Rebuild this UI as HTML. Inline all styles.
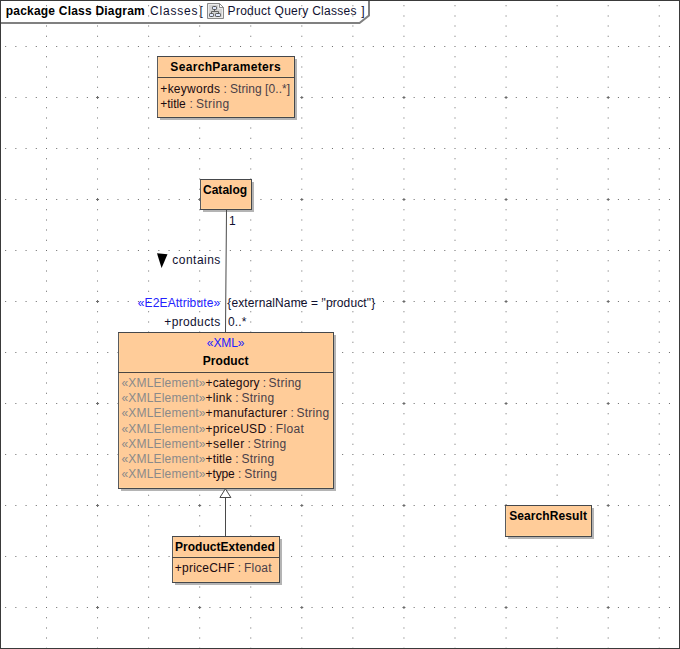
<!DOCTYPE html>
<html><head><meta charset="utf-8"><style>
html,body{margin:0;padding:0;background:#fff;width:680px;height:649px;overflow:hidden}
svg{display:block}
text{font-family:"Liberation Sans",sans-serif;font-size:12px}
.b{font-weight:bold}
</style></head><body>
<svg width="680" height="649" viewBox="0 0 680 649">
<rect x="0" y="0" width="680" height="649" fill="#fff"/>
<path d="M5.15 46h1v1h-1zM15.36 46h1v1h-1zM25.57 46h1v1h-1zM35.79 46h1v1h-1zM46.00 46h1v1h-1zM56.21 46h1v1h-1zM66.42 46h1v1h-1zM76.64 46h1v1h-1zM86.85 46h1v1h-1zM97.06 46h1v1h-1zM107.28 46h1v1h-1zM117.49 46h1v1h-1zM127.70 46h1v1h-1zM137.91 46h1v1h-1zM148.12 46h1v1h-1zM158.34 46h1v1h-1zM168.55 46h1v1h-1zM178.76 46h1v1h-1zM188.97 46h1v1h-1zM199.19 46h1v1h-1zM209.40 46h1v1h-1zM219.61 46h1v1h-1zM229.83 46h1v1h-1zM240.04 46h1v1h-1zM250.25 46h1v1h-1zM260.46 46h1v1h-1zM270.68 46h1v1h-1zM280.89 46h1v1h-1zM291.10 46h1v1h-1zM301.31 46h1v1h-1zM311.53 46h1v1h-1zM321.74 46h1v1h-1zM331.95 46h1v1h-1zM342.16 46h1v1h-1zM352.38 46h1v1h-1zM362.59 46h1v1h-1zM372.80 46h1v1h-1zM383.01 46h1v1h-1zM393.23 46h1v1h-1zM403.44 46h1v1h-1zM413.65 46h1v1h-1zM423.86 46h1v1h-1zM434.07 46h1v1h-1zM444.29 46h1v1h-1zM454.50 46h1v1h-1zM464.71 46h1v1h-1zM474.93 46h1v1h-1zM485.14 46h1v1h-1zM495.35 46h1v1h-1zM505.56 46h1v1h-1zM515.78 46h1v1h-1zM525.99 46h1v1h-1zM536.20 46h1v1h-1zM546.41 46h1v1h-1zM556.62 46h1v1h-1zM566.84 46h1v1h-1zM577.05 46h1v1h-1zM587.26 46h1v1h-1zM597.48 46h1v1h-1zM607.69 46h1v1h-1zM617.90 46h1v1h-1zM628.11 46h1v1h-1zM638.33 46h1v1h-1zM648.54 46h1v1h-1zM658.75 46h1v1h-1zM668.96 46h1v1h-1zM679.18 46h1v1h-1zM5.15 97h1v1h-1zM15.36 97h1v1h-1zM25.57 97h1v1h-1zM35.79 97h1v1h-1zM46.00 97h1v1h-1zM56.21 97h1v1h-1zM66.42 97h1v1h-1zM76.64 97h1v1h-1zM86.85 97h1v1h-1zM97.06 97h1v1h-1zM107.28 97h1v1h-1zM117.49 97h1v1h-1zM127.70 97h1v1h-1zM137.91 97h1v1h-1zM148.12 97h1v1h-1zM158.34 97h1v1h-1zM168.55 97h1v1h-1zM178.76 97h1v1h-1zM188.97 97h1v1h-1zM199.19 97h1v1h-1zM209.40 97h1v1h-1zM219.61 97h1v1h-1zM229.83 97h1v1h-1zM240.04 97h1v1h-1zM250.25 97h1v1h-1zM260.46 97h1v1h-1zM270.68 97h1v1h-1zM280.89 97h1v1h-1zM291.10 97h1v1h-1zM301.31 97h1v1h-1zM311.53 97h1v1h-1zM321.74 97h1v1h-1zM331.95 97h1v1h-1zM342.16 97h1v1h-1zM352.38 97h1v1h-1zM362.59 97h1v1h-1zM372.80 97h1v1h-1zM383.01 97h1v1h-1zM393.23 97h1v1h-1zM403.44 97h1v1h-1zM413.65 97h1v1h-1zM423.86 97h1v1h-1zM434.07 97h1v1h-1zM444.29 97h1v1h-1zM454.50 97h1v1h-1zM464.71 97h1v1h-1zM474.93 97h1v1h-1zM485.14 97h1v1h-1zM495.35 97h1v1h-1zM505.56 97h1v1h-1zM515.78 97h1v1h-1zM525.99 97h1v1h-1zM536.20 97h1v1h-1zM546.41 97h1v1h-1zM556.62 97h1v1h-1zM566.84 97h1v1h-1zM577.05 97h1v1h-1zM587.26 97h1v1h-1zM597.48 97h1v1h-1zM607.69 97h1v1h-1zM617.90 97h1v1h-1zM628.11 97h1v1h-1zM638.33 97h1v1h-1zM648.54 97h1v1h-1zM658.75 97h1v1h-1zM668.96 97h1v1h-1zM679.18 97h1v1h-1zM5.15 148h1v1h-1zM15.36 148h1v1h-1zM25.57 148h1v1h-1zM35.79 148h1v1h-1zM46.00 148h1v1h-1zM56.21 148h1v1h-1zM66.42 148h1v1h-1zM76.64 148h1v1h-1zM86.85 148h1v1h-1zM97.06 148h1v1h-1zM107.28 148h1v1h-1zM117.49 148h1v1h-1zM127.70 148h1v1h-1zM137.91 148h1v1h-1zM148.12 148h1v1h-1zM158.34 148h1v1h-1zM168.55 148h1v1h-1zM178.76 148h1v1h-1zM188.97 148h1v1h-1zM199.19 148h1v1h-1zM209.40 148h1v1h-1zM219.61 148h1v1h-1zM229.83 148h1v1h-1zM240.04 148h1v1h-1zM250.25 148h1v1h-1zM260.46 148h1v1h-1zM270.68 148h1v1h-1zM280.89 148h1v1h-1zM291.10 148h1v1h-1zM301.31 148h1v1h-1zM311.53 148h1v1h-1zM321.74 148h1v1h-1zM331.95 148h1v1h-1zM342.16 148h1v1h-1zM352.38 148h1v1h-1zM362.59 148h1v1h-1zM372.80 148h1v1h-1zM383.01 148h1v1h-1zM393.23 148h1v1h-1zM403.44 148h1v1h-1zM413.65 148h1v1h-1zM423.86 148h1v1h-1zM434.07 148h1v1h-1zM444.29 148h1v1h-1zM454.50 148h1v1h-1zM464.71 148h1v1h-1zM474.93 148h1v1h-1zM485.14 148h1v1h-1zM495.35 148h1v1h-1zM505.56 148h1v1h-1zM515.78 148h1v1h-1zM525.99 148h1v1h-1zM536.20 148h1v1h-1zM546.41 148h1v1h-1zM556.62 148h1v1h-1zM566.84 148h1v1h-1zM577.05 148h1v1h-1zM587.26 148h1v1h-1zM597.48 148h1v1h-1zM607.69 148h1v1h-1zM617.90 148h1v1h-1zM628.11 148h1v1h-1zM638.33 148h1v1h-1zM648.54 148h1v1h-1zM658.75 148h1v1h-1zM668.96 148h1v1h-1zM679.18 148h1v1h-1zM5.15 199h1v1h-1zM15.36 199h1v1h-1zM25.57 199h1v1h-1zM35.79 199h1v1h-1zM46.00 199h1v1h-1zM56.21 199h1v1h-1zM66.42 199h1v1h-1zM76.64 199h1v1h-1zM86.85 199h1v1h-1zM97.06 199h1v1h-1zM107.28 199h1v1h-1zM117.49 199h1v1h-1zM127.70 199h1v1h-1zM137.91 199h1v1h-1zM148.12 199h1v1h-1zM158.34 199h1v1h-1zM168.55 199h1v1h-1zM178.76 199h1v1h-1zM188.97 199h1v1h-1zM199.19 199h1v1h-1zM209.40 199h1v1h-1zM219.61 199h1v1h-1zM229.83 199h1v1h-1zM240.04 199h1v1h-1zM250.25 199h1v1h-1zM260.46 199h1v1h-1zM270.68 199h1v1h-1zM280.89 199h1v1h-1zM291.10 199h1v1h-1zM301.31 199h1v1h-1zM311.53 199h1v1h-1zM321.74 199h1v1h-1zM331.95 199h1v1h-1zM342.16 199h1v1h-1zM352.38 199h1v1h-1zM362.59 199h1v1h-1zM372.80 199h1v1h-1zM383.01 199h1v1h-1zM393.23 199h1v1h-1zM403.44 199h1v1h-1zM413.65 199h1v1h-1zM423.86 199h1v1h-1zM434.07 199h1v1h-1zM444.29 199h1v1h-1zM454.50 199h1v1h-1zM464.71 199h1v1h-1zM474.93 199h1v1h-1zM485.14 199h1v1h-1zM495.35 199h1v1h-1zM505.56 199h1v1h-1zM515.78 199h1v1h-1zM525.99 199h1v1h-1zM536.20 199h1v1h-1zM546.41 199h1v1h-1zM556.62 199h1v1h-1zM566.84 199h1v1h-1zM577.05 199h1v1h-1zM587.26 199h1v1h-1zM597.48 199h1v1h-1zM607.69 199h1v1h-1zM617.90 199h1v1h-1zM628.11 199h1v1h-1zM638.33 199h1v1h-1zM648.54 199h1v1h-1zM658.75 199h1v1h-1zM668.96 199h1v1h-1zM679.18 199h1v1h-1zM5.15 250h1v1h-1zM15.36 250h1v1h-1zM25.57 250h1v1h-1zM35.79 250h1v1h-1zM46.00 250h1v1h-1zM56.21 250h1v1h-1zM66.42 250h1v1h-1zM76.64 250h1v1h-1zM86.85 250h1v1h-1zM97.06 250h1v1h-1zM107.28 250h1v1h-1zM117.49 250h1v1h-1zM127.70 250h1v1h-1zM137.91 250h1v1h-1zM148.12 250h1v1h-1zM158.34 250h1v1h-1zM168.55 250h1v1h-1zM178.76 250h1v1h-1zM188.97 250h1v1h-1zM199.19 250h1v1h-1zM209.40 250h1v1h-1zM219.61 250h1v1h-1zM229.83 250h1v1h-1zM240.04 250h1v1h-1zM250.25 250h1v1h-1zM260.46 250h1v1h-1zM270.68 250h1v1h-1zM280.89 250h1v1h-1zM291.10 250h1v1h-1zM301.31 250h1v1h-1zM311.53 250h1v1h-1zM321.74 250h1v1h-1zM331.95 250h1v1h-1zM342.16 250h1v1h-1zM352.38 250h1v1h-1zM362.59 250h1v1h-1zM372.80 250h1v1h-1zM383.01 250h1v1h-1zM393.23 250h1v1h-1zM403.44 250h1v1h-1zM413.65 250h1v1h-1zM423.86 250h1v1h-1zM434.07 250h1v1h-1zM444.29 250h1v1h-1zM454.50 250h1v1h-1zM464.71 250h1v1h-1zM474.93 250h1v1h-1zM485.14 250h1v1h-1zM495.35 250h1v1h-1zM505.56 250h1v1h-1zM515.78 250h1v1h-1zM525.99 250h1v1h-1zM536.20 250h1v1h-1zM546.41 250h1v1h-1zM556.62 250h1v1h-1zM566.84 250h1v1h-1zM577.05 250h1v1h-1zM587.26 250h1v1h-1zM597.48 250h1v1h-1zM607.69 250h1v1h-1zM617.90 250h1v1h-1zM628.11 250h1v1h-1zM638.33 250h1v1h-1zM648.54 250h1v1h-1zM658.75 250h1v1h-1zM668.96 250h1v1h-1zM679.18 250h1v1h-1zM5.15 301h1v1h-1zM15.36 301h1v1h-1zM25.57 301h1v1h-1zM35.79 301h1v1h-1zM46.00 301h1v1h-1zM56.21 301h1v1h-1zM66.42 301h1v1h-1zM76.64 301h1v1h-1zM86.85 301h1v1h-1zM97.06 301h1v1h-1zM107.28 301h1v1h-1zM117.49 301h1v1h-1zM127.70 301h1v1h-1zM137.91 301h1v1h-1zM148.12 301h1v1h-1zM158.34 301h1v1h-1zM168.55 301h1v1h-1zM178.76 301h1v1h-1zM188.97 301h1v1h-1zM199.19 301h1v1h-1zM209.40 301h1v1h-1zM219.61 301h1v1h-1zM229.83 301h1v1h-1zM240.04 301h1v1h-1zM250.25 301h1v1h-1zM260.46 301h1v1h-1zM270.68 301h1v1h-1zM280.89 301h1v1h-1zM291.10 301h1v1h-1zM301.31 301h1v1h-1zM311.53 301h1v1h-1zM321.74 301h1v1h-1zM331.95 301h1v1h-1zM342.16 301h1v1h-1zM352.38 301h1v1h-1zM362.59 301h1v1h-1zM372.80 301h1v1h-1zM383.01 301h1v1h-1zM393.23 301h1v1h-1zM403.44 301h1v1h-1zM413.65 301h1v1h-1zM423.86 301h1v1h-1zM434.07 301h1v1h-1zM444.29 301h1v1h-1zM454.50 301h1v1h-1zM464.71 301h1v1h-1zM474.93 301h1v1h-1zM485.14 301h1v1h-1zM495.35 301h1v1h-1zM505.56 301h1v1h-1zM515.78 301h1v1h-1zM525.99 301h1v1h-1zM536.20 301h1v1h-1zM546.41 301h1v1h-1zM556.62 301h1v1h-1zM566.84 301h1v1h-1zM577.05 301h1v1h-1zM587.26 301h1v1h-1zM597.48 301h1v1h-1zM607.69 301h1v1h-1zM617.90 301h1v1h-1zM628.11 301h1v1h-1zM638.33 301h1v1h-1zM648.54 301h1v1h-1zM658.75 301h1v1h-1zM668.96 301h1v1h-1zM679.18 301h1v1h-1zM5.15 352h1v1h-1zM15.36 352h1v1h-1zM25.57 352h1v1h-1zM35.79 352h1v1h-1zM46.00 352h1v1h-1zM56.21 352h1v1h-1zM66.42 352h1v1h-1zM76.64 352h1v1h-1zM86.85 352h1v1h-1zM97.06 352h1v1h-1zM107.28 352h1v1h-1zM117.49 352h1v1h-1zM127.70 352h1v1h-1zM137.91 352h1v1h-1zM148.12 352h1v1h-1zM158.34 352h1v1h-1zM168.55 352h1v1h-1zM178.76 352h1v1h-1zM188.97 352h1v1h-1zM199.19 352h1v1h-1zM209.40 352h1v1h-1zM219.61 352h1v1h-1zM229.83 352h1v1h-1zM240.04 352h1v1h-1zM250.25 352h1v1h-1zM260.46 352h1v1h-1zM270.68 352h1v1h-1zM280.89 352h1v1h-1zM291.10 352h1v1h-1zM301.31 352h1v1h-1zM311.53 352h1v1h-1zM321.74 352h1v1h-1zM331.95 352h1v1h-1zM342.16 352h1v1h-1zM352.38 352h1v1h-1zM362.59 352h1v1h-1zM372.80 352h1v1h-1zM383.01 352h1v1h-1zM393.23 352h1v1h-1zM403.44 352h1v1h-1zM413.65 352h1v1h-1zM423.86 352h1v1h-1zM434.07 352h1v1h-1zM444.29 352h1v1h-1zM454.50 352h1v1h-1zM464.71 352h1v1h-1zM474.93 352h1v1h-1zM485.14 352h1v1h-1zM495.35 352h1v1h-1zM505.56 352h1v1h-1zM515.78 352h1v1h-1zM525.99 352h1v1h-1zM536.20 352h1v1h-1zM546.41 352h1v1h-1zM556.62 352h1v1h-1zM566.84 352h1v1h-1zM577.05 352h1v1h-1zM587.26 352h1v1h-1zM597.48 352h1v1h-1zM607.69 352h1v1h-1zM617.90 352h1v1h-1zM628.11 352h1v1h-1zM638.33 352h1v1h-1zM648.54 352h1v1h-1zM658.75 352h1v1h-1zM668.96 352h1v1h-1zM679.18 352h1v1h-1zM5.15 403h1v1h-1zM15.36 403h1v1h-1zM25.57 403h1v1h-1zM35.79 403h1v1h-1zM46.00 403h1v1h-1zM56.21 403h1v1h-1zM66.42 403h1v1h-1zM76.64 403h1v1h-1zM86.85 403h1v1h-1zM97.06 403h1v1h-1zM107.28 403h1v1h-1zM117.49 403h1v1h-1zM127.70 403h1v1h-1zM137.91 403h1v1h-1zM148.12 403h1v1h-1zM158.34 403h1v1h-1zM168.55 403h1v1h-1zM178.76 403h1v1h-1zM188.97 403h1v1h-1zM199.19 403h1v1h-1zM209.40 403h1v1h-1zM219.61 403h1v1h-1zM229.83 403h1v1h-1zM240.04 403h1v1h-1zM250.25 403h1v1h-1zM260.46 403h1v1h-1zM270.68 403h1v1h-1zM280.89 403h1v1h-1zM291.10 403h1v1h-1zM301.31 403h1v1h-1zM311.53 403h1v1h-1zM321.74 403h1v1h-1zM331.95 403h1v1h-1zM342.16 403h1v1h-1zM352.38 403h1v1h-1zM362.59 403h1v1h-1zM372.80 403h1v1h-1zM383.01 403h1v1h-1zM393.23 403h1v1h-1zM403.44 403h1v1h-1zM413.65 403h1v1h-1zM423.86 403h1v1h-1zM434.07 403h1v1h-1zM444.29 403h1v1h-1zM454.50 403h1v1h-1zM464.71 403h1v1h-1zM474.93 403h1v1h-1zM485.14 403h1v1h-1zM495.35 403h1v1h-1zM505.56 403h1v1h-1zM515.78 403h1v1h-1zM525.99 403h1v1h-1zM536.20 403h1v1h-1zM546.41 403h1v1h-1zM556.62 403h1v1h-1zM566.84 403h1v1h-1zM577.05 403h1v1h-1zM587.26 403h1v1h-1zM597.48 403h1v1h-1zM607.69 403h1v1h-1zM617.90 403h1v1h-1zM628.11 403h1v1h-1zM638.33 403h1v1h-1zM648.54 403h1v1h-1zM658.75 403h1v1h-1zM668.96 403h1v1h-1zM679.18 403h1v1h-1zM5.15 454h1v1h-1zM15.36 454h1v1h-1zM25.57 454h1v1h-1zM35.79 454h1v1h-1zM46.00 454h1v1h-1zM56.21 454h1v1h-1zM66.42 454h1v1h-1zM76.64 454h1v1h-1zM86.85 454h1v1h-1zM97.06 454h1v1h-1zM107.28 454h1v1h-1zM117.49 454h1v1h-1zM127.70 454h1v1h-1zM137.91 454h1v1h-1zM148.12 454h1v1h-1zM158.34 454h1v1h-1zM168.55 454h1v1h-1zM178.76 454h1v1h-1zM188.97 454h1v1h-1zM199.19 454h1v1h-1zM209.40 454h1v1h-1zM219.61 454h1v1h-1zM229.83 454h1v1h-1zM240.04 454h1v1h-1zM250.25 454h1v1h-1zM260.46 454h1v1h-1zM270.68 454h1v1h-1zM280.89 454h1v1h-1zM291.10 454h1v1h-1zM301.31 454h1v1h-1zM311.53 454h1v1h-1zM321.74 454h1v1h-1zM331.95 454h1v1h-1zM342.16 454h1v1h-1zM352.38 454h1v1h-1zM362.59 454h1v1h-1zM372.80 454h1v1h-1zM383.01 454h1v1h-1zM393.23 454h1v1h-1zM403.44 454h1v1h-1zM413.65 454h1v1h-1zM423.86 454h1v1h-1zM434.07 454h1v1h-1zM444.29 454h1v1h-1zM454.50 454h1v1h-1zM464.71 454h1v1h-1zM474.93 454h1v1h-1zM485.14 454h1v1h-1zM495.35 454h1v1h-1zM505.56 454h1v1h-1zM515.78 454h1v1h-1zM525.99 454h1v1h-1zM536.20 454h1v1h-1zM546.41 454h1v1h-1zM556.62 454h1v1h-1zM566.84 454h1v1h-1zM577.05 454h1v1h-1zM587.26 454h1v1h-1zM597.48 454h1v1h-1zM607.69 454h1v1h-1zM617.90 454h1v1h-1zM628.11 454h1v1h-1zM638.33 454h1v1h-1zM648.54 454h1v1h-1zM658.75 454h1v1h-1zM668.96 454h1v1h-1zM679.18 454h1v1h-1zM5.15 505h1v1h-1zM15.36 505h1v1h-1zM25.57 505h1v1h-1zM35.79 505h1v1h-1zM46.00 505h1v1h-1zM56.21 505h1v1h-1zM66.42 505h1v1h-1zM76.64 505h1v1h-1zM86.85 505h1v1h-1zM97.06 505h1v1h-1zM107.28 505h1v1h-1zM117.49 505h1v1h-1zM127.70 505h1v1h-1zM137.91 505h1v1h-1zM148.12 505h1v1h-1zM158.34 505h1v1h-1zM168.55 505h1v1h-1zM178.76 505h1v1h-1zM188.97 505h1v1h-1zM199.19 505h1v1h-1zM209.40 505h1v1h-1zM219.61 505h1v1h-1zM229.83 505h1v1h-1zM240.04 505h1v1h-1zM250.25 505h1v1h-1zM260.46 505h1v1h-1zM270.68 505h1v1h-1zM280.89 505h1v1h-1zM291.10 505h1v1h-1zM301.31 505h1v1h-1zM311.53 505h1v1h-1zM321.74 505h1v1h-1zM331.95 505h1v1h-1zM342.16 505h1v1h-1zM352.38 505h1v1h-1zM362.59 505h1v1h-1zM372.80 505h1v1h-1zM383.01 505h1v1h-1zM393.23 505h1v1h-1zM403.44 505h1v1h-1zM413.65 505h1v1h-1zM423.86 505h1v1h-1zM434.07 505h1v1h-1zM444.29 505h1v1h-1zM454.50 505h1v1h-1zM464.71 505h1v1h-1zM474.93 505h1v1h-1zM485.14 505h1v1h-1zM495.35 505h1v1h-1zM505.56 505h1v1h-1zM515.78 505h1v1h-1zM525.99 505h1v1h-1zM536.20 505h1v1h-1zM546.41 505h1v1h-1zM556.62 505h1v1h-1zM566.84 505h1v1h-1zM577.05 505h1v1h-1zM587.26 505h1v1h-1zM597.48 505h1v1h-1zM607.69 505h1v1h-1zM617.90 505h1v1h-1zM628.11 505h1v1h-1zM638.33 505h1v1h-1zM648.54 505h1v1h-1zM658.75 505h1v1h-1zM668.96 505h1v1h-1zM679.18 505h1v1h-1zM5.15 556h1v1h-1zM15.36 556h1v1h-1zM25.57 556h1v1h-1zM35.79 556h1v1h-1zM46.00 556h1v1h-1zM56.21 556h1v1h-1zM66.42 556h1v1h-1zM76.64 556h1v1h-1zM86.85 556h1v1h-1zM97.06 556h1v1h-1zM107.28 556h1v1h-1zM117.49 556h1v1h-1zM127.70 556h1v1h-1zM137.91 556h1v1h-1zM148.12 556h1v1h-1zM158.34 556h1v1h-1zM168.55 556h1v1h-1zM178.76 556h1v1h-1zM188.97 556h1v1h-1zM199.19 556h1v1h-1zM209.40 556h1v1h-1zM219.61 556h1v1h-1zM229.83 556h1v1h-1zM240.04 556h1v1h-1zM250.25 556h1v1h-1zM260.46 556h1v1h-1zM270.68 556h1v1h-1zM280.89 556h1v1h-1zM291.10 556h1v1h-1zM301.31 556h1v1h-1zM311.53 556h1v1h-1zM321.74 556h1v1h-1zM331.95 556h1v1h-1zM342.16 556h1v1h-1zM352.38 556h1v1h-1zM362.59 556h1v1h-1zM372.80 556h1v1h-1zM383.01 556h1v1h-1zM393.23 556h1v1h-1zM403.44 556h1v1h-1zM413.65 556h1v1h-1zM423.86 556h1v1h-1zM434.07 556h1v1h-1zM444.29 556h1v1h-1zM454.50 556h1v1h-1zM464.71 556h1v1h-1zM474.93 556h1v1h-1zM485.14 556h1v1h-1zM495.35 556h1v1h-1zM505.56 556h1v1h-1zM515.78 556h1v1h-1zM525.99 556h1v1h-1zM536.20 556h1v1h-1zM546.41 556h1v1h-1zM556.62 556h1v1h-1zM566.84 556h1v1h-1zM577.05 556h1v1h-1zM587.26 556h1v1h-1zM597.48 556h1v1h-1zM607.69 556h1v1h-1zM617.90 556h1v1h-1zM628.11 556h1v1h-1zM638.33 556h1v1h-1zM648.54 556h1v1h-1zM658.75 556h1v1h-1zM668.96 556h1v1h-1zM679.18 556h1v1h-1zM5.15 607h1v1h-1zM15.36 607h1v1h-1zM25.57 607h1v1h-1zM35.79 607h1v1h-1zM46.00 607h1v1h-1zM56.21 607h1v1h-1zM66.42 607h1v1h-1zM76.64 607h1v1h-1zM86.85 607h1v1h-1zM97.06 607h1v1h-1zM107.28 607h1v1h-1zM117.49 607h1v1h-1zM127.70 607h1v1h-1zM137.91 607h1v1h-1zM148.12 607h1v1h-1zM158.34 607h1v1h-1zM168.55 607h1v1h-1zM178.76 607h1v1h-1zM188.97 607h1v1h-1zM199.19 607h1v1h-1zM209.40 607h1v1h-1zM219.61 607h1v1h-1zM229.83 607h1v1h-1zM240.04 607h1v1h-1zM250.25 607h1v1h-1zM260.46 607h1v1h-1zM270.68 607h1v1h-1zM280.89 607h1v1h-1zM291.10 607h1v1h-1zM301.31 607h1v1h-1zM311.53 607h1v1h-1zM321.74 607h1v1h-1zM331.95 607h1v1h-1zM342.16 607h1v1h-1zM352.38 607h1v1h-1zM362.59 607h1v1h-1zM372.80 607h1v1h-1zM383.01 607h1v1h-1zM393.23 607h1v1h-1zM403.44 607h1v1h-1zM413.65 607h1v1h-1zM423.86 607h1v1h-1zM434.07 607h1v1h-1zM444.29 607h1v1h-1zM454.50 607h1v1h-1zM464.71 607h1v1h-1zM474.93 607h1v1h-1zM485.14 607h1v1h-1zM495.35 607h1v1h-1zM505.56 607h1v1h-1zM515.78 607h1v1h-1zM525.99 607h1v1h-1zM536.20 607h1v1h-1zM546.41 607h1v1h-1zM556.62 607h1v1h-1zM566.84 607h1v1h-1zM577.05 607h1v1h-1zM587.26 607h1v1h-1zM597.48 607h1v1h-1zM607.69 607h1v1h-1zM617.90 607h1v1h-1zM628.11 607h1v1h-1zM638.33 607h1v1h-1zM648.54 607h1v1h-1zM658.75 607h1v1h-1zM668.96 607h1v1h-1zM679.18 607h1v1h-1zM5.15 658h1v1h-1zM15.36 658h1v1h-1zM25.57 658h1v1h-1zM35.79 658h1v1h-1zM46.00 658h1v1h-1zM56.21 658h1v1h-1zM66.42 658h1v1h-1zM76.64 658h1v1h-1zM86.85 658h1v1h-1zM97.06 658h1v1h-1zM107.28 658h1v1h-1zM117.49 658h1v1h-1zM127.70 658h1v1h-1zM137.91 658h1v1h-1zM148.12 658h1v1h-1zM158.34 658h1v1h-1zM168.55 658h1v1h-1zM178.76 658h1v1h-1zM188.97 658h1v1h-1zM199.19 658h1v1h-1zM209.40 658h1v1h-1zM219.61 658h1v1h-1zM229.83 658h1v1h-1zM240.04 658h1v1h-1zM250.25 658h1v1h-1zM260.46 658h1v1h-1zM270.68 658h1v1h-1zM280.89 658h1v1h-1zM291.10 658h1v1h-1zM301.31 658h1v1h-1zM311.53 658h1v1h-1zM321.74 658h1v1h-1zM331.95 658h1v1h-1zM342.16 658h1v1h-1zM352.38 658h1v1h-1zM362.59 658h1v1h-1zM372.80 658h1v1h-1zM383.01 658h1v1h-1zM393.23 658h1v1h-1zM403.44 658h1v1h-1zM413.65 658h1v1h-1zM423.86 658h1v1h-1zM434.07 658h1v1h-1zM444.29 658h1v1h-1zM454.50 658h1v1h-1zM464.71 658h1v1h-1zM474.93 658h1v1h-1zM485.14 658h1v1h-1zM495.35 658h1v1h-1zM505.56 658h1v1h-1zM515.78 658h1v1h-1zM525.99 658h1v1h-1zM536.20 658h1v1h-1zM546.41 658h1v1h-1zM556.62 658h1v1h-1zM566.84 658h1v1h-1zM577.05 658h1v1h-1zM587.26 658h1v1h-1zM597.48 658h1v1h-1zM607.69 658h1v1h-1zM617.90 658h1v1h-1zM628.11 658h1v1h-1zM638.33 658h1v1h-1zM648.54 658h1v1h-1zM658.75 658h1v1h-1zM668.96 658h1v1h-1zM679.18 658h1v1h-1zM46.00 5.2h1v1h-1zM46.00 15.4h1v1h-1zM46.00 25.6h1v1h-1zM46.00 35.8h1v1h-1zM46.00 56.2h1v1h-1zM46.00 66.4h1v1h-1zM46.00 76.6h1v1h-1zM46.00 86.8h1v1h-1zM46.00 107.2h1v1h-1zM46.00 117.4h1v1h-1zM46.00 127.6h1v1h-1zM46.00 137.8h1v1h-1zM46.00 158.2h1v1h-1zM46.00 168.4h1v1h-1zM46.00 178.6h1v1h-1zM46.00 188.8h1v1h-1zM46.00 209.2h1v1h-1zM46.00 219.4h1v1h-1zM46.00 229.6h1v1h-1zM46.00 239.8h1v1h-1zM46.00 260.2h1v1h-1zM46.00 270.4h1v1h-1zM46.00 280.6h1v1h-1zM46.00 290.8h1v1h-1zM46.00 311.2h1v1h-1zM46.00 321.4h1v1h-1zM46.00 331.6h1v1h-1zM46.00 341.8h1v1h-1zM46.00 362.2h1v1h-1zM46.00 372.4h1v1h-1zM46.00 382.6h1v1h-1zM46.00 392.8h1v1h-1zM46.00 413.2h1v1h-1zM46.00 423.4h1v1h-1zM46.00 433.6h1v1h-1zM46.00 443.8h1v1h-1zM46.00 464.2h1v1h-1zM46.00 474.4h1v1h-1zM46.00 484.6h1v1h-1zM46.00 494.8h1v1h-1zM46.00 515.2h1v1h-1zM46.00 525.4h1v1h-1zM46.00 535.6h1v1h-1zM46.00 545.8h1v1h-1zM46.00 566.2h1v1h-1zM46.00 576.4h1v1h-1zM46.00 586.6h1v1h-1zM46.00 596.8h1v1h-1zM46.00 617.2h1v1h-1zM46.00 627.4h1v1h-1zM46.00 637.6h1v1h-1zM46.00 647.8h1v1h-1zM97.06 5.2h1v1h-1zM97.06 15.4h1v1h-1zM97.06 25.6h1v1h-1zM97.06 35.8h1v1h-1zM97.06 56.2h1v1h-1zM97.06 66.4h1v1h-1zM97.06 76.6h1v1h-1zM97.06 86.8h1v1h-1zM97.06 107.2h1v1h-1zM97.06 117.4h1v1h-1zM97.06 127.6h1v1h-1zM97.06 137.8h1v1h-1zM97.06 158.2h1v1h-1zM97.06 168.4h1v1h-1zM97.06 178.6h1v1h-1zM97.06 188.8h1v1h-1zM97.06 209.2h1v1h-1zM97.06 219.4h1v1h-1zM97.06 229.6h1v1h-1zM97.06 239.8h1v1h-1zM97.06 260.2h1v1h-1zM97.06 270.4h1v1h-1zM97.06 280.6h1v1h-1zM97.06 290.8h1v1h-1zM97.06 311.2h1v1h-1zM97.06 321.4h1v1h-1zM97.06 331.6h1v1h-1zM97.06 341.8h1v1h-1zM97.06 362.2h1v1h-1zM97.06 372.4h1v1h-1zM97.06 382.6h1v1h-1zM97.06 392.8h1v1h-1zM97.06 413.2h1v1h-1zM97.06 423.4h1v1h-1zM97.06 433.6h1v1h-1zM97.06 443.8h1v1h-1zM97.06 464.2h1v1h-1zM97.06 474.4h1v1h-1zM97.06 484.6h1v1h-1zM97.06 494.8h1v1h-1zM97.06 515.2h1v1h-1zM97.06 525.4h1v1h-1zM97.06 535.6h1v1h-1zM97.06 545.8h1v1h-1zM97.06 566.2h1v1h-1zM97.06 576.4h1v1h-1zM97.06 586.6h1v1h-1zM97.06 596.8h1v1h-1zM97.06 617.2h1v1h-1zM97.06 627.4h1v1h-1zM97.06 637.6h1v1h-1zM97.06 647.8h1v1h-1zM148.12 5.2h1v1h-1zM148.12 15.4h1v1h-1zM148.12 25.6h1v1h-1zM148.12 35.8h1v1h-1zM148.12 56.2h1v1h-1zM148.12 66.4h1v1h-1zM148.12 76.6h1v1h-1zM148.12 86.8h1v1h-1zM148.12 107.2h1v1h-1zM148.12 117.4h1v1h-1zM148.12 127.6h1v1h-1zM148.12 137.8h1v1h-1zM148.12 158.2h1v1h-1zM148.12 168.4h1v1h-1zM148.12 178.6h1v1h-1zM148.12 188.8h1v1h-1zM148.12 209.2h1v1h-1zM148.12 219.4h1v1h-1zM148.12 229.6h1v1h-1zM148.12 239.8h1v1h-1zM148.12 260.2h1v1h-1zM148.12 270.4h1v1h-1zM148.12 280.6h1v1h-1zM148.12 290.8h1v1h-1zM148.12 311.2h1v1h-1zM148.12 321.4h1v1h-1zM148.12 331.6h1v1h-1zM148.12 341.8h1v1h-1zM148.12 362.2h1v1h-1zM148.12 372.4h1v1h-1zM148.12 382.6h1v1h-1zM148.12 392.8h1v1h-1zM148.12 413.2h1v1h-1zM148.12 423.4h1v1h-1zM148.12 433.6h1v1h-1zM148.12 443.8h1v1h-1zM148.12 464.2h1v1h-1zM148.12 474.4h1v1h-1zM148.12 484.6h1v1h-1zM148.12 494.8h1v1h-1zM148.12 515.2h1v1h-1zM148.12 525.4h1v1h-1zM148.12 535.6h1v1h-1zM148.12 545.8h1v1h-1zM148.12 566.2h1v1h-1zM148.12 576.4h1v1h-1zM148.12 586.6h1v1h-1zM148.12 596.8h1v1h-1zM148.12 617.2h1v1h-1zM148.12 627.4h1v1h-1zM148.12 637.6h1v1h-1zM148.12 647.8h1v1h-1zM199.19 5.2h1v1h-1zM199.19 15.4h1v1h-1zM199.19 25.6h1v1h-1zM199.19 35.8h1v1h-1zM199.19 56.2h1v1h-1zM199.19 66.4h1v1h-1zM199.19 76.6h1v1h-1zM199.19 86.8h1v1h-1zM199.19 107.2h1v1h-1zM199.19 117.4h1v1h-1zM199.19 127.6h1v1h-1zM199.19 137.8h1v1h-1zM199.19 158.2h1v1h-1zM199.19 168.4h1v1h-1zM199.19 178.6h1v1h-1zM199.19 188.8h1v1h-1zM199.19 209.2h1v1h-1zM199.19 219.4h1v1h-1zM199.19 229.6h1v1h-1zM199.19 239.8h1v1h-1zM199.19 260.2h1v1h-1zM199.19 270.4h1v1h-1zM199.19 280.6h1v1h-1zM199.19 290.8h1v1h-1zM199.19 311.2h1v1h-1zM199.19 321.4h1v1h-1zM199.19 331.6h1v1h-1zM199.19 341.8h1v1h-1zM199.19 362.2h1v1h-1zM199.19 372.4h1v1h-1zM199.19 382.6h1v1h-1zM199.19 392.8h1v1h-1zM199.19 413.2h1v1h-1zM199.19 423.4h1v1h-1zM199.19 433.6h1v1h-1zM199.19 443.8h1v1h-1zM199.19 464.2h1v1h-1zM199.19 474.4h1v1h-1zM199.19 484.6h1v1h-1zM199.19 494.8h1v1h-1zM199.19 515.2h1v1h-1zM199.19 525.4h1v1h-1zM199.19 535.6h1v1h-1zM199.19 545.8h1v1h-1zM199.19 566.2h1v1h-1zM199.19 576.4h1v1h-1zM199.19 586.6h1v1h-1zM199.19 596.8h1v1h-1zM199.19 617.2h1v1h-1zM199.19 627.4h1v1h-1zM199.19 637.6h1v1h-1zM199.19 647.8h1v1h-1zM250.25 5.2h1v1h-1zM250.25 15.4h1v1h-1zM250.25 25.6h1v1h-1zM250.25 35.8h1v1h-1zM250.25 56.2h1v1h-1zM250.25 66.4h1v1h-1zM250.25 76.6h1v1h-1zM250.25 86.8h1v1h-1zM250.25 107.2h1v1h-1zM250.25 117.4h1v1h-1zM250.25 127.6h1v1h-1zM250.25 137.8h1v1h-1zM250.25 158.2h1v1h-1zM250.25 168.4h1v1h-1zM250.25 178.6h1v1h-1zM250.25 188.8h1v1h-1zM250.25 209.2h1v1h-1zM250.25 219.4h1v1h-1zM250.25 229.6h1v1h-1zM250.25 239.8h1v1h-1zM250.25 260.2h1v1h-1zM250.25 270.4h1v1h-1zM250.25 280.6h1v1h-1zM250.25 290.8h1v1h-1zM250.25 311.2h1v1h-1zM250.25 321.4h1v1h-1zM250.25 331.6h1v1h-1zM250.25 341.8h1v1h-1zM250.25 362.2h1v1h-1zM250.25 372.4h1v1h-1zM250.25 382.6h1v1h-1zM250.25 392.8h1v1h-1zM250.25 413.2h1v1h-1zM250.25 423.4h1v1h-1zM250.25 433.6h1v1h-1zM250.25 443.8h1v1h-1zM250.25 464.2h1v1h-1zM250.25 474.4h1v1h-1zM250.25 484.6h1v1h-1zM250.25 494.8h1v1h-1zM250.25 515.2h1v1h-1zM250.25 525.4h1v1h-1zM250.25 535.6h1v1h-1zM250.25 545.8h1v1h-1zM250.25 566.2h1v1h-1zM250.25 576.4h1v1h-1zM250.25 586.6h1v1h-1zM250.25 596.8h1v1h-1zM250.25 617.2h1v1h-1zM250.25 627.4h1v1h-1zM250.25 637.6h1v1h-1zM250.25 647.8h1v1h-1zM301.31 5.2h1v1h-1zM301.31 15.4h1v1h-1zM301.31 25.6h1v1h-1zM301.31 35.8h1v1h-1zM301.31 56.2h1v1h-1zM301.31 66.4h1v1h-1zM301.31 76.6h1v1h-1zM301.31 86.8h1v1h-1zM301.31 107.2h1v1h-1zM301.31 117.4h1v1h-1zM301.31 127.6h1v1h-1zM301.31 137.8h1v1h-1zM301.31 158.2h1v1h-1zM301.31 168.4h1v1h-1zM301.31 178.6h1v1h-1zM301.31 188.8h1v1h-1zM301.31 209.2h1v1h-1zM301.31 219.4h1v1h-1zM301.31 229.6h1v1h-1zM301.31 239.8h1v1h-1zM301.31 260.2h1v1h-1zM301.31 270.4h1v1h-1zM301.31 280.6h1v1h-1zM301.31 290.8h1v1h-1zM301.31 311.2h1v1h-1zM301.31 321.4h1v1h-1zM301.31 331.6h1v1h-1zM301.31 341.8h1v1h-1zM301.31 362.2h1v1h-1zM301.31 372.4h1v1h-1zM301.31 382.6h1v1h-1zM301.31 392.8h1v1h-1zM301.31 413.2h1v1h-1zM301.31 423.4h1v1h-1zM301.31 433.6h1v1h-1zM301.31 443.8h1v1h-1zM301.31 464.2h1v1h-1zM301.31 474.4h1v1h-1zM301.31 484.6h1v1h-1zM301.31 494.8h1v1h-1zM301.31 515.2h1v1h-1zM301.31 525.4h1v1h-1zM301.31 535.6h1v1h-1zM301.31 545.8h1v1h-1zM301.31 566.2h1v1h-1zM301.31 576.4h1v1h-1zM301.31 586.6h1v1h-1zM301.31 596.8h1v1h-1zM301.31 617.2h1v1h-1zM301.31 627.4h1v1h-1zM301.31 637.6h1v1h-1zM301.31 647.8h1v1h-1zM352.38 5.2h1v1h-1zM352.38 15.4h1v1h-1zM352.38 25.6h1v1h-1zM352.38 35.8h1v1h-1zM352.38 56.2h1v1h-1zM352.38 66.4h1v1h-1zM352.38 76.6h1v1h-1zM352.38 86.8h1v1h-1zM352.38 107.2h1v1h-1zM352.38 117.4h1v1h-1zM352.38 127.6h1v1h-1zM352.38 137.8h1v1h-1zM352.38 158.2h1v1h-1zM352.38 168.4h1v1h-1zM352.38 178.6h1v1h-1zM352.38 188.8h1v1h-1zM352.38 209.2h1v1h-1zM352.38 219.4h1v1h-1zM352.38 229.6h1v1h-1zM352.38 239.8h1v1h-1zM352.38 260.2h1v1h-1zM352.38 270.4h1v1h-1zM352.38 280.6h1v1h-1zM352.38 290.8h1v1h-1zM352.38 311.2h1v1h-1zM352.38 321.4h1v1h-1zM352.38 331.6h1v1h-1zM352.38 341.8h1v1h-1zM352.38 362.2h1v1h-1zM352.38 372.4h1v1h-1zM352.38 382.6h1v1h-1zM352.38 392.8h1v1h-1zM352.38 413.2h1v1h-1zM352.38 423.4h1v1h-1zM352.38 433.6h1v1h-1zM352.38 443.8h1v1h-1zM352.38 464.2h1v1h-1zM352.38 474.4h1v1h-1zM352.38 484.6h1v1h-1zM352.38 494.8h1v1h-1zM352.38 515.2h1v1h-1zM352.38 525.4h1v1h-1zM352.38 535.6h1v1h-1zM352.38 545.8h1v1h-1zM352.38 566.2h1v1h-1zM352.38 576.4h1v1h-1zM352.38 586.6h1v1h-1zM352.38 596.8h1v1h-1zM352.38 617.2h1v1h-1zM352.38 627.4h1v1h-1zM352.38 637.6h1v1h-1zM352.38 647.8h1v1h-1zM403.44 5.2h1v1h-1zM403.44 15.4h1v1h-1zM403.44 25.6h1v1h-1zM403.44 35.8h1v1h-1zM403.44 56.2h1v1h-1zM403.44 66.4h1v1h-1zM403.44 76.6h1v1h-1zM403.44 86.8h1v1h-1zM403.44 107.2h1v1h-1zM403.44 117.4h1v1h-1zM403.44 127.6h1v1h-1zM403.44 137.8h1v1h-1zM403.44 158.2h1v1h-1zM403.44 168.4h1v1h-1zM403.44 178.6h1v1h-1zM403.44 188.8h1v1h-1zM403.44 209.2h1v1h-1zM403.44 219.4h1v1h-1zM403.44 229.6h1v1h-1zM403.44 239.8h1v1h-1zM403.44 260.2h1v1h-1zM403.44 270.4h1v1h-1zM403.44 280.6h1v1h-1zM403.44 290.8h1v1h-1zM403.44 311.2h1v1h-1zM403.44 321.4h1v1h-1zM403.44 331.6h1v1h-1zM403.44 341.8h1v1h-1zM403.44 362.2h1v1h-1zM403.44 372.4h1v1h-1zM403.44 382.6h1v1h-1zM403.44 392.8h1v1h-1zM403.44 413.2h1v1h-1zM403.44 423.4h1v1h-1zM403.44 433.6h1v1h-1zM403.44 443.8h1v1h-1zM403.44 464.2h1v1h-1zM403.44 474.4h1v1h-1zM403.44 484.6h1v1h-1zM403.44 494.8h1v1h-1zM403.44 515.2h1v1h-1zM403.44 525.4h1v1h-1zM403.44 535.6h1v1h-1zM403.44 545.8h1v1h-1zM403.44 566.2h1v1h-1zM403.44 576.4h1v1h-1zM403.44 586.6h1v1h-1zM403.44 596.8h1v1h-1zM403.44 617.2h1v1h-1zM403.44 627.4h1v1h-1zM403.44 637.6h1v1h-1zM403.44 647.8h1v1h-1zM454.50 5.2h1v1h-1zM454.50 15.4h1v1h-1zM454.50 25.6h1v1h-1zM454.50 35.8h1v1h-1zM454.50 56.2h1v1h-1zM454.50 66.4h1v1h-1zM454.50 76.6h1v1h-1zM454.50 86.8h1v1h-1zM454.50 107.2h1v1h-1zM454.50 117.4h1v1h-1zM454.50 127.6h1v1h-1zM454.50 137.8h1v1h-1zM454.50 158.2h1v1h-1zM454.50 168.4h1v1h-1zM454.50 178.6h1v1h-1zM454.50 188.8h1v1h-1zM454.50 209.2h1v1h-1zM454.50 219.4h1v1h-1zM454.50 229.6h1v1h-1zM454.50 239.8h1v1h-1zM454.50 260.2h1v1h-1zM454.50 270.4h1v1h-1zM454.50 280.6h1v1h-1zM454.50 290.8h1v1h-1zM454.50 311.2h1v1h-1zM454.50 321.4h1v1h-1zM454.50 331.6h1v1h-1zM454.50 341.8h1v1h-1zM454.50 362.2h1v1h-1zM454.50 372.4h1v1h-1zM454.50 382.6h1v1h-1zM454.50 392.8h1v1h-1zM454.50 413.2h1v1h-1zM454.50 423.4h1v1h-1zM454.50 433.6h1v1h-1zM454.50 443.8h1v1h-1zM454.50 464.2h1v1h-1zM454.50 474.4h1v1h-1zM454.50 484.6h1v1h-1zM454.50 494.8h1v1h-1zM454.50 515.2h1v1h-1zM454.50 525.4h1v1h-1zM454.50 535.6h1v1h-1zM454.50 545.8h1v1h-1zM454.50 566.2h1v1h-1zM454.50 576.4h1v1h-1zM454.50 586.6h1v1h-1zM454.50 596.8h1v1h-1zM454.50 617.2h1v1h-1zM454.50 627.4h1v1h-1zM454.50 637.6h1v1h-1zM454.50 647.8h1v1h-1zM505.56 5.2h1v1h-1zM505.56 15.4h1v1h-1zM505.56 25.6h1v1h-1zM505.56 35.8h1v1h-1zM505.56 56.2h1v1h-1zM505.56 66.4h1v1h-1zM505.56 76.6h1v1h-1zM505.56 86.8h1v1h-1zM505.56 107.2h1v1h-1zM505.56 117.4h1v1h-1zM505.56 127.6h1v1h-1zM505.56 137.8h1v1h-1zM505.56 158.2h1v1h-1zM505.56 168.4h1v1h-1zM505.56 178.6h1v1h-1zM505.56 188.8h1v1h-1zM505.56 209.2h1v1h-1zM505.56 219.4h1v1h-1zM505.56 229.6h1v1h-1zM505.56 239.8h1v1h-1zM505.56 260.2h1v1h-1zM505.56 270.4h1v1h-1zM505.56 280.6h1v1h-1zM505.56 290.8h1v1h-1zM505.56 311.2h1v1h-1zM505.56 321.4h1v1h-1zM505.56 331.6h1v1h-1zM505.56 341.8h1v1h-1zM505.56 362.2h1v1h-1zM505.56 372.4h1v1h-1zM505.56 382.6h1v1h-1zM505.56 392.8h1v1h-1zM505.56 413.2h1v1h-1zM505.56 423.4h1v1h-1zM505.56 433.6h1v1h-1zM505.56 443.8h1v1h-1zM505.56 464.2h1v1h-1zM505.56 474.4h1v1h-1zM505.56 484.6h1v1h-1zM505.56 494.8h1v1h-1zM505.56 515.2h1v1h-1zM505.56 525.4h1v1h-1zM505.56 535.6h1v1h-1zM505.56 545.8h1v1h-1zM505.56 566.2h1v1h-1zM505.56 576.4h1v1h-1zM505.56 586.6h1v1h-1zM505.56 596.8h1v1h-1zM505.56 617.2h1v1h-1zM505.56 627.4h1v1h-1zM505.56 637.6h1v1h-1zM505.56 647.8h1v1h-1zM556.62 5.2h1v1h-1zM556.62 15.4h1v1h-1zM556.62 25.6h1v1h-1zM556.62 35.8h1v1h-1zM556.62 56.2h1v1h-1zM556.62 66.4h1v1h-1zM556.62 76.6h1v1h-1zM556.62 86.8h1v1h-1zM556.62 107.2h1v1h-1zM556.62 117.4h1v1h-1zM556.62 127.6h1v1h-1zM556.62 137.8h1v1h-1zM556.62 158.2h1v1h-1zM556.62 168.4h1v1h-1zM556.62 178.6h1v1h-1zM556.62 188.8h1v1h-1zM556.62 209.2h1v1h-1zM556.62 219.4h1v1h-1zM556.62 229.6h1v1h-1zM556.62 239.8h1v1h-1zM556.62 260.2h1v1h-1zM556.62 270.4h1v1h-1zM556.62 280.6h1v1h-1zM556.62 290.8h1v1h-1zM556.62 311.2h1v1h-1zM556.62 321.4h1v1h-1zM556.62 331.6h1v1h-1zM556.62 341.8h1v1h-1zM556.62 362.2h1v1h-1zM556.62 372.4h1v1h-1zM556.62 382.6h1v1h-1zM556.62 392.8h1v1h-1zM556.62 413.2h1v1h-1zM556.62 423.4h1v1h-1zM556.62 433.6h1v1h-1zM556.62 443.8h1v1h-1zM556.62 464.2h1v1h-1zM556.62 474.4h1v1h-1zM556.62 484.6h1v1h-1zM556.62 494.8h1v1h-1zM556.62 515.2h1v1h-1zM556.62 525.4h1v1h-1zM556.62 535.6h1v1h-1zM556.62 545.8h1v1h-1zM556.62 566.2h1v1h-1zM556.62 576.4h1v1h-1zM556.62 586.6h1v1h-1zM556.62 596.8h1v1h-1zM556.62 617.2h1v1h-1zM556.62 627.4h1v1h-1zM556.62 637.6h1v1h-1zM556.62 647.8h1v1h-1zM607.69 5.2h1v1h-1zM607.69 15.4h1v1h-1zM607.69 25.6h1v1h-1zM607.69 35.8h1v1h-1zM607.69 56.2h1v1h-1zM607.69 66.4h1v1h-1zM607.69 76.6h1v1h-1zM607.69 86.8h1v1h-1zM607.69 107.2h1v1h-1zM607.69 117.4h1v1h-1zM607.69 127.6h1v1h-1zM607.69 137.8h1v1h-1zM607.69 158.2h1v1h-1zM607.69 168.4h1v1h-1zM607.69 178.6h1v1h-1zM607.69 188.8h1v1h-1zM607.69 209.2h1v1h-1zM607.69 219.4h1v1h-1zM607.69 229.6h1v1h-1zM607.69 239.8h1v1h-1zM607.69 260.2h1v1h-1zM607.69 270.4h1v1h-1zM607.69 280.6h1v1h-1zM607.69 290.8h1v1h-1zM607.69 311.2h1v1h-1zM607.69 321.4h1v1h-1zM607.69 331.6h1v1h-1zM607.69 341.8h1v1h-1zM607.69 362.2h1v1h-1zM607.69 372.4h1v1h-1zM607.69 382.6h1v1h-1zM607.69 392.8h1v1h-1zM607.69 413.2h1v1h-1zM607.69 423.4h1v1h-1zM607.69 433.6h1v1h-1zM607.69 443.8h1v1h-1zM607.69 464.2h1v1h-1zM607.69 474.4h1v1h-1zM607.69 484.6h1v1h-1zM607.69 494.8h1v1h-1zM607.69 515.2h1v1h-1zM607.69 525.4h1v1h-1zM607.69 535.6h1v1h-1zM607.69 545.8h1v1h-1zM607.69 566.2h1v1h-1zM607.69 576.4h1v1h-1zM607.69 586.6h1v1h-1zM607.69 596.8h1v1h-1zM607.69 617.2h1v1h-1zM607.69 627.4h1v1h-1zM607.69 637.6h1v1h-1zM607.69 647.8h1v1h-1zM658.75 5.2h1v1h-1zM658.75 15.4h1v1h-1zM658.75 25.6h1v1h-1zM658.75 35.8h1v1h-1zM658.75 56.2h1v1h-1zM658.75 66.4h1v1h-1zM658.75 76.6h1v1h-1zM658.75 86.8h1v1h-1zM658.75 107.2h1v1h-1zM658.75 117.4h1v1h-1zM658.75 127.6h1v1h-1zM658.75 137.8h1v1h-1zM658.75 158.2h1v1h-1zM658.75 168.4h1v1h-1zM658.75 178.6h1v1h-1zM658.75 188.8h1v1h-1zM658.75 209.2h1v1h-1zM658.75 219.4h1v1h-1zM658.75 229.6h1v1h-1zM658.75 239.8h1v1h-1zM658.75 260.2h1v1h-1zM658.75 270.4h1v1h-1zM658.75 280.6h1v1h-1zM658.75 290.8h1v1h-1zM658.75 311.2h1v1h-1zM658.75 321.4h1v1h-1zM658.75 331.6h1v1h-1zM658.75 341.8h1v1h-1zM658.75 362.2h1v1h-1zM658.75 372.4h1v1h-1zM658.75 382.6h1v1h-1zM658.75 392.8h1v1h-1zM658.75 413.2h1v1h-1zM658.75 423.4h1v1h-1zM658.75 433.6h1v1h-1zM658.75 443.8h1v1h-1zM658.75 464.2h1v1h-1zM658.75 474.4h1v1h-1zM658.75 484.6h1v1h-1zM658.75 494.8h1v1h-1zM658.75 515.2h1v1h-1zM658.75 525.4h1v1h-1zM658.75 535.6h1v1h-1zM658.75 545.8h1v1h-1zM658.75 566.2h1v1h-1zM658.75 576.4h1v1h-1zM658.75 586.6h1v1h-1zM658.75 596.8h1v1h-1zM658.75 617.2h1v1h-1zM658.75 627.4h1v1h-1zM658.75 637.6h1v1h-1zM658.75 647.8h1v1h-1z" fill="#6a6a6a"/>
<path d="M96.06 97h3v1h-3zM97.06 96h1v1h-1zM97.06 98h1v1h-1zM96.06 199h3v1h-3zM97.06 198h1v1h-1zM97.06 200h1v1h-1zM96.06 301h3v1h-3zM97.06 300h1v1h-1zM97.06 302h1v1h-1zM96.06 403h3v1h-3zM97.06 402h1v1h-1zM97.06 404h1v1h-1zM96.06 505h3v1h-3zM97.06 504h1v1h-1zM97.06 506h1v1h-1zM96.06 607h3v1h-3zM97.06 606h1v1h-1zM97.06 608h1v1h-1zM198.19 97h3v1h-3zM199.19 96h1v1h-1zM199.19 98h1v1h-1zM198.19 199h3v1h-3zM199.19 198h1v1h-1zM199.19 200h1v1h-1zM198.19 301h3v1h-3zM199.19 300h1v1h-1zM199.19 302h1v1h-1zM198.19 403h3v1h-3zM199.19 402h1v1h-1zM199.19 404h1v1h-1zM198.19 505h3v1h-3zM199.19 504h1v1h-1zM199.19 506h1v1h-1zM198.19 607h3v1h-3zM199.19 606h1v1h-1zM199.19 608h1v1h-1zM300.31 97h3v1h-3zM301.31 96h1v1h-1zM301.31 98h1v1h-1zM300.31 199h3v1h-3zM301.31 198h1v1h-1zM301.31 200h1v1h-1zM300.31 301h3v1h-3zM301.31 300h1v1h-1zM301.31 302h1v1h-1zM300.31 403h3v1h-3zM301.31 402h1v1h-1zM301.31 404h1v1h-1zM300.31 505h3v1h-3zM301.31 504h1v1h-1zM301.31 506h1v1h-1zM300.31 607h3v1h-3zM301.31 606h1v1h-1zM301.31 608h1v1h-1zM402.44 97h3v1h-3zM403.44 96h1v1h-1zM403.44 98h1v1h-1zM402.44 199h3v1h-3zM403.44 198h1v1h-1zM403.44 200h1v1h-1zM402.44 301h3v1h-3zM403.44 300h1v1h-1zM403.44 302h1v1h-1zM402.44 403h3v1h-3zM403.44 402h1v1h-1zM403.44 404h1v1h-1zM402.44 505h3v1h-3zM403.44 504h1v1h-1zM403.44 506h1v1h-1zM402.44 607h3v1h-3zM403.44 606h1v1h-1zM403.44 608h1v1h-1zM504.56 97h3v1h-3zM505.56 96h1v1h-1zM505.56 98h1v1h-1zM504.56 199h3v1h-3zM505.56 198h1v1h-1zM505.56 200h1v1h-1zM504.56 301h3v1h-3zM505.56 300h1v1h-1zM505.56 302h1v1h-1zM504.56 403h3v1h-3zM505.56 402h1v1h-1zM505.56 404h1v1h-1zM504.56 505h3v1h-3zM505.56 504h1v1h-1zM505.56 506h1v1h-1zM504.56 607h3v1h-3zM505.56 606h1v1h-1zM505.56 608h1v1h-1zM606.69 97h3v1h-3zM607.69 96h1v1h-1zM607.69 98h1v1h-1zM606.69 199h3v1h-3zM607.69 198h1v1h-1zM607.69 200h1v1h-1zM606.69 301h3v1h-3zM607.69 300h1v1h-1zM607.69 302h1v1h-1zM606.69 403h3v1h-3zM607.69 402h1v1h-1zM607.69 404h1v1h-1zM606.69 505h3v1h-3zM607.69 504h1v1h-1zM607.69 506h1v1h-1zM606.69 607h3v1h-3zM607.69 606h1v1h-1zM607.69 608h1v1h-1z" fill="#6a6a6a"/>
<path d="M0 23H359.5L369 15.5V0" fill="none" stroke="#808080" stroke-width="2"/>
<rect x="0.5" y="0.5" width="679" height="648" fill="none" stroke="#3a3a3a"/>
<g>
<path d="M207.5 3.5H219.5L223.5 7.5V18.5H207.5Z" fill="#d4d4d4" stroke="#8a8a8a"/>
<path d="M208.5 4.5H218.5V8.5H222.5V17.5H208.5Z" fill="none" stroke="#ededed"/>
<path d="M219.5 3.5V7.5H223.5Z" fill="#fff" stroke="#8a8a8a"/>
<rect x="212.5" y="6.5" width="4" height="3" rx="0.8" fill="#dfe9ff" stroke="#444" stroke-width="0.9"/>
<rect x="209.5" y="13.5" width="4" height="3" rx="0.8" fill="#dfe9ff" stroke="#444" stroke-width="0.9"/>
<rect x="215.5" y="13.5" width="5" height="3" rx="0.8" fill="#dfe9ff" stroke="#444" stroke-width="0.9"/>
<path d="M214.5 10v1.5M211.5 11.5h7M211.5 11.5V13M218.5 11.5V13" stroke="#555" stroke-width="0.9" fill="none"/>
</g>
<path d="M157 253.3L167.5 254.3L161.6 268Z" fill="#000"/>
<rect x="295" y="59" width="2" height="61" fill="#b4b4b4"/>
<rect x="160" y="118" width="137" height="2" fill="#b4b4b4"/>
<rect x="157" y="56" width="138" height="62" fill="#45474b"/>
<rect x="158" y="57" width="136" height="60" fill="#FFD49F"/>
<rect x="158" y="57" width="135" height="59" fill="#FFCC99"/>
<rect x="157" y="57" width="1" height="60" fill="#595b5f"/>
<rect x="158" y="57" width="1" height="60" fill="#FFD39E"/>
<rect x="158" y="76" width="136" height="1" fill="#FFD49F"/>
<rect x="157" y="77" width="138" height="1" fill="#4a4542"/><rect x="252" y="182" width="2" height="30" fill="#b4b4b4"/>
<rect x="203" y="210" width="51" height="2" fill="#b4b4b4"/>
<rect x="200" y="179" width="52" height="31" fill="#45474b"/>
<rect x="201" y="180" width="50" height="29" fill="#FFD49F"/>
<rect x="201" y="180" width="49" height="28" fill="#FFCC99"/>
<rect x="200" y="180" width="1" height="29" fill="#595b5f"/>
<rect x="201" y="180" width="1" height="29" fill="#FFD39E"/><rect x="334" y="335" width="2" height="156" fill="#b4b4b4"/>
<rect x="121" y="489" width="215" height="2" fill="#b4b4b4"/>
<rect x="118" y="332" width="216" height="157" fill="#45474b"/>
<rect x="119" y="333" width="214" height="155" fill="#FFD49F"/>
<rect x="119" y="333" width="213" height="154" fill="#FFCC99"/>
<rect x="118" y="333" width="1" height="155" fill="#595b5f"/>
<rect x="119" y="333" width="1" height="155" fill="#FFD39E"/>
<rect x="119" y="371" width="214" height="1" fill="#FFD49F"/>
<rect x="118" y="372" width="216" height="1" fill="#4a4542"/><rect x="280" y="539" width="2" height="46" fill="#b4b4b4"/>
<rect x="175" y="583" width="107" height="2" fill="#b4b4b4"/>
<rect x="172" y="536" width="108" height="47" fill="#45474b"/>
<rect x="173" y="537" width="106" height="45" fill="#FFD49F"/>
<rect x="173" y="537" width="105" height="44" fill="#FFCC99"/>
<rect x="172" y="537" width="1" height="45" fill="#595b5f"/>
<rect x="173" y="537" width="1" height="45" fill="#FFD39E"/>
<rect x="173" y="556" width="106" height="1" fill="#FFD49F"/>
<rect x="172" y="557" width="108" height="1" fill="#4a4542"/><rect x="592" y="508" width="2" height="31" fill="#b4b4b4"/>
<rect x="508" y="537" width="86" height="2" fill="#b4b4b4"/>
<rect x="505" y="505" width="87" height="32" fill="#45474b"/>
<rect x="506" y="506" width="85" height="30" fill="#FFD49F"/>
<rect x="506" y="506" width="84" height="29" fill="#FFCC99"/>
<rect x="505" y="506" width="1" height="30" fill="#595b5f"/>
<rect x="506" y="506" width="1" height="30" fill="#FFD39E"/>
<path d="M226.5 210L225.5 332" stroke="#4a4a4a" stroke-width="1" fill="none"/>
<rect x="225" y="497" width="1" height="39" fill="#4a4a4a"/>
<path d="M225.4 488.8L219.9 497.5H230.9Z" fill="#fff" stroke="#484848"/>
<text x="5.71" y="15" class="b" textLength="139.00" lengthAdjust="spacing" style="fill:#000">package Class Diagram</text>
<text x="150.04" y="15" textLength="47.39" lengthAdjust="spacing" style="fill:#101030">Classes</text>
<text x="199.51" y="15" style="fill:#101030">[</text>
<text x="227.61" y="15" textLength="128.90" lengthAdjust="spacing" style="fill:#101030">Product Query Classes</text>
<text x="361.26" y="15" style="fill:#101030">]</text>
<text x="170.28" y="71" class="b" textLength="110.52" lengthAdjust="spacing" style="fill:#000">SearchParameters</text>
<text x="160.37" y="93" textLength="59.68" lengthAdjust="spacing" style="fill:#1a0a10">+keywords</text>
<text x="223.54" y="93" style="fill:#4a4048">:</text>
<text x="229.90" y="93" textLength="60.29" lengthAdjust="spacing" style="fill:#4a4048">String [0..*]</text>
<text x="160.37" y="108" textLength="25.37" lengthAdjust="spacing" style="fill:#1a0a10">+title</text>
<text x="189.39" y="108" style="fill:#4a4048">:</text>
<text x="196.00" y="108" textLength="33.18" lengthAdjust="spacing" style="fill:#4a4048">String</text>
<text x="202.96" y="194" class="b" textLength="44.19" lengthAdjust="spacing" style="fill:#000">Catalog</text>
<text x="228.95" y="225" style="fill:#101030">1</text>
<text x="172.32" y="264" textLength="48.03" lengthAdjust="spacing" style="fill:#101030">contains</text>
<text x="137.82" y="307" textLength="82.34" lengthAdjust="spacing" style="fill:#2222ff">«E2EAttribute»</text>
<text x="227.31" y="307" textLength="147.85" lengthAdjust="spacing" style="fill:#101030">{externalName = &quot;product&quot;}</text>
<text x="164.27" y="326" textLength="55.90" lengthAdjust="spacing" style="fill:#101030">+products</text>
<text x="227.97" y="326" textLength="18.56" lengthAdjust="spacing" style="fill:#101030">0..*</text>
<text x="206.82" y="347" textLength="37.73" lengthAdjust="spacing" style="fill:#2222ff">«XML»</text>
<text x="202.63" y="365" class="b" textLength="45.90" lengthAdjust="spacing" style="fill:#000">Product</text>
<text x="121.42" y="387" textLength="84.05" lengthAdjust="spacing" style="fill:#8a8a8a">«XMLElement»</text>
<text x="205.57" y="387" textLength="53.97" lengthAdjust="spacing" style="fill:#1a0a10">+category</text>
<text x="262.79" y="387" style="fill:#4a4048">:</text>
<text x="268.50" y="387" textLength="32.78" lengthAdjust="spacing" style="fill:#4a4048">String</text>
<text x="121.42" y="402" textLength="84.05" lengthAdjust="spacing" style="fill:#8a8a8a">«XMLElement»</text>
<text x="205.57" y="402" textLength="26.19" lengthAdjust="spacing" style="fill:#1a0a10">+link</text>
<text x="235.34" y="402" style="fill:#4a4048">:</text>
<text x="241.40" y="402" textLength="32.78" lengthAdjust="spacing" style="fill:#4a4048">String</text>
<text x="121.42" y="417" textLength="84.05" lengthAdjust="spacing" style="fill:#8a8a8a">«XMLElement»</text>
<text x="205.57" y="417" textLength="81.34" lengthAdjust="spacing" style="fill:#1a0a10">+manufacturer</text>
<text x="290.39" y="417" style="fill:#4a4048">:</text>
<text x="296.50" y="417" textLength="32.58" lengthAdjust="spacing" style="fill:#4a4048">String</text>
<text x="121.42" y="433" textLength="84.05" lengthAdjust="spacing" style="fill:#8a8a8a">«XMLElement»</text>
<text x="205.57" y="433" textLength="60.48" lengthAdjust="spacing" style="fill:#1a0a10">+priceUSD</text>
<text x="269.54" y="433" style="fill:#4a4048">:</text>
<text x="275.71" y="433" textLength="28.20" lengthAdjust="spacing" style="fill:#4a4048">Float</text>
<text x="121.42" y="448" textLength="84.05" lengthAdjust="spacing" style="fill:#8a8a8a">«XMLElement»</text>
<text x="205.57" y="448" textLength="38.61" lengthAdjust="spacing" style="fill:#1a0a10">+seller</text>
<text x="247.39" y="448" style="fill:#4a4048">:</text>
<text x="253.20" y="448" textLength="32.98" lengthAdjust="spacing" style="fill:#4a4048">String</text>
<text x="121.42" y="463" textLength="84.05" lengthAdjust="spacing" style="fill:#8a8a8a">«XMLElement»</text>
<text x="205.57" y="463" textLength="26.27" lengthAdjust="spacing" style="fill:#1a0a10">+title</text>
<text x="235.14" y="463" style="fill:#4a4048">:</text>
<text x="241.40" y="463" textLength="32.78" lengthAdjust="spacing" style="fill:#4a4048">String</text>
<text x="121.42" y="478" textLength="84.05" lengthAdjust="spacing" style="fill:#8a8a8a">«XMLElement»</text>
<text x="205.57" y="478" textLength="29.18" lengthAdjust="spacing" style="fill:#1a0a10">+type</text>
<text x="238.04" y="478" style="fill:#4a4048">:</text>
<text x="244.30" y="478" textLength="32.58" lengthAdjust="spacing" style="fill:#4a4048">String</text>
<text x="175.03" y="551" class="b" textLength="99.72" lengthAdjust="spacing" style="fill:#000">ProductExtended</text>
<text x="174.87" y="572" textLength="59.37" lengthAdjust="spacing" style="fill:#1a0a10">+priceCHF</text>
<text x="237.69" y="572" style="fill:#4a4048">:</text>
<text x="244.01" y="572" textLength="27.50" lengthAdjust="spacing" style="fill:#4a4048">Float</text>
<text x="509.18" y="520" class="b" textLength="77.71" lengthAdjust="spacing" style="fill:#000">SearchResult</text>
</svg>
</body></html>
